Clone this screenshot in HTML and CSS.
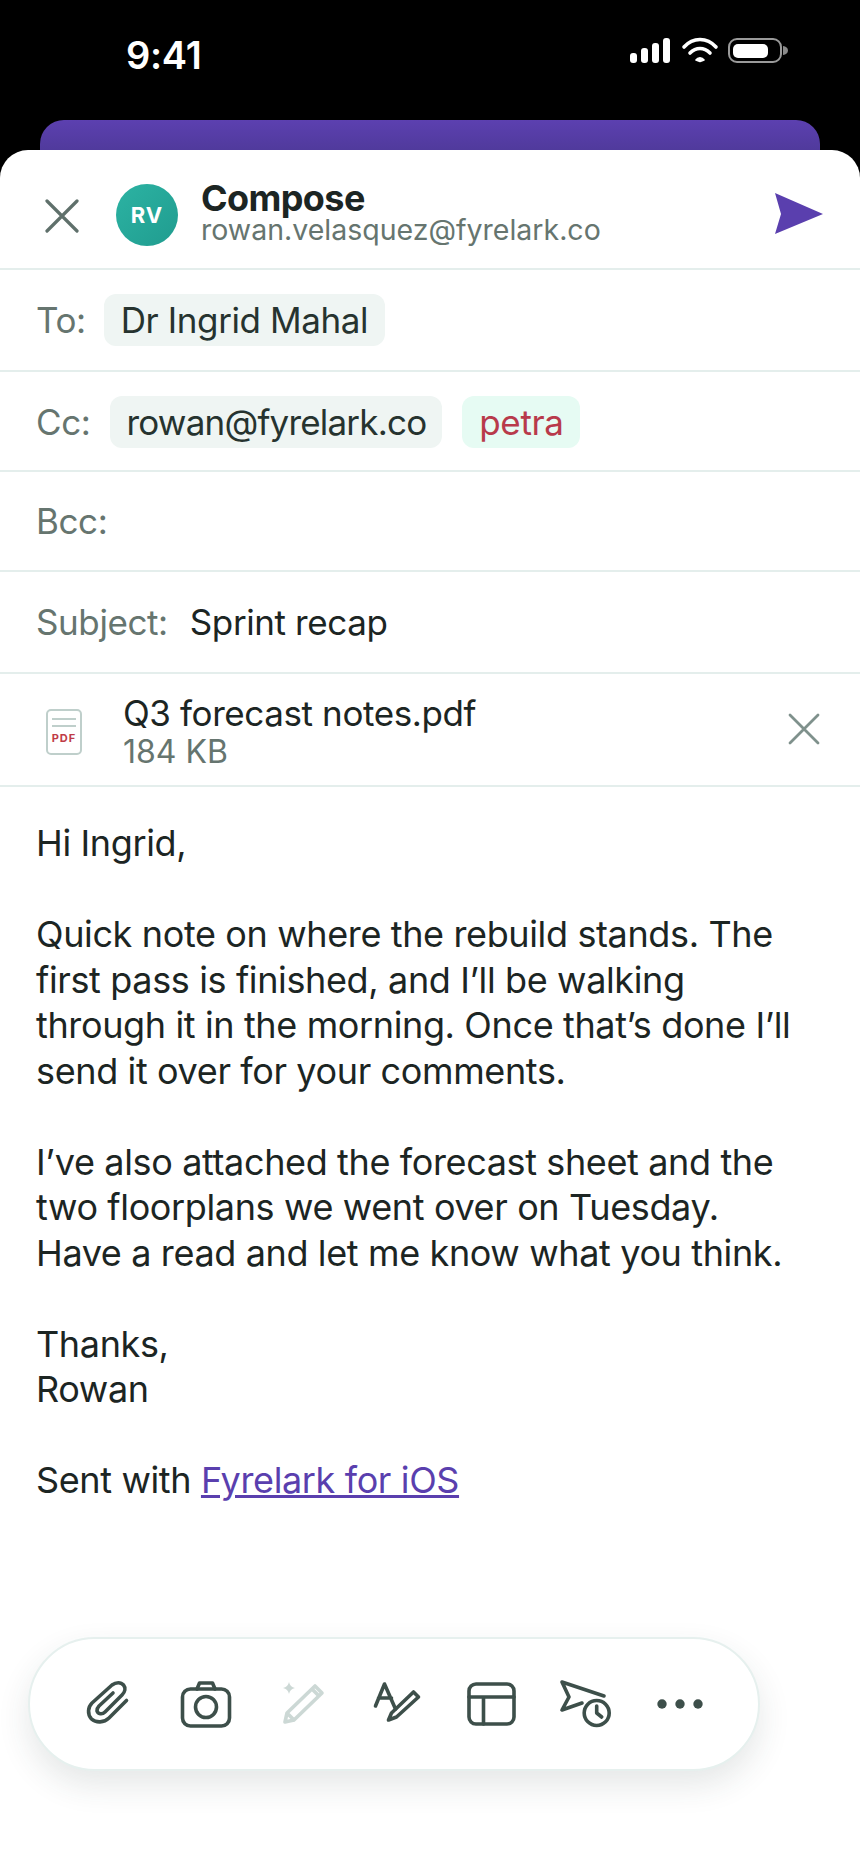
FILE: index.html
```html
<!DOCTYPE html>
<html lang="en">
<head>
    <meta charset="UTF-8">
    <meta name="viewport" content="width=device-width, initial-scale=1.0">
    <title>Compose</title>
    <link rel="stylesheet" href="styles.css">
</head>
<body>
    <div class="status-bar">
        <span class="time">9:41</span>
        <svg class="status-icons" width="160" height="30" viewBox="0 0 160 30">
            <rect x="0" y="17" width="7" height="10" rx="3" fill="#fff"/>
            <rect x="11" y="12" width="7" height="15" rx="3" fill="#fff"/>
            <rect x="22" y="7" width="7" height="20" rx="3" fill="#fff"/>
            <rect x="33" y="2" width="7" height="25" rx="3" fill="#fff"/>
            <path d="M54 11 C63 1 77 1 86 11" fill="none" stroke="#fff" stroke-width="3.6" stroke-linecap="round"/>
            <path d="M60 17 C66 11 74 11 80 17" fill="none" stroke="#fff" stroke-width="3.6" stroke-linecap="round"/>
            <path d="M66 24 C68 21 72 21 74 24 L70 25.5 Z" fill="#fff" stroke="#fff" stroke-width="1.6" stroke-linejoin="round"/>
            <rect x="99" y="3" width="52" height="23" rx="8" fill="none" stroke="#9a9a9a" stroke-width="2"/>
            <rect x="103" y="8" width="35" height="14" rx="5" fill="#fff"/>
            <path d="M153 10 c3 0.5 5 2 5 4.500 s-2 4 -5 4.500 Z" fill="#8a8a8a"/>
        </svg>
    </div>
    <div class="card-behind"></div>

    <div class="sheet">
        <header class="compose-head">
            <svg class="close-icon" width="34" height="34" viewBox="0 0 34 34">
                <path d="M2 2 L32 32 M32 2 L2 32" fill="none" stroke="#5f706b" stroke-width="3.200" stroke-linecap="round"/>
            </svg>
            <div class="avatar">RV</div>
            <div class="head-text">
                <div class="head-title">Compose</div>
                <div class="head-email">rowan.velasquez@fyrelark.co</div>
            </div>
            <svg class="send-icon" width="48" height="42" viewBox="0 0 48 42">
                <path d="M0 0 L48 21 L0 41 L6 21 Z" fill="#5a3fae"/>
            </svg>
        </header>

        <div class="row row-to">
            <span class="label">To:</span>
            <span class="chip">Dr Ingrid Mahal</span>
        </div>
        <div class="row row-cc">
            <span class="label">Cc:</span>
            <span class="chip chip-addr">rowan@fyrelark.co</span>
            <span class="chip chip-bad">petra</span>
        </div>
        <div class="row row-bcc">
            <span class="label">Bcc:</span>
        </div>
        <div class="row row-subject">
            <span class="label">Subject:</span>
            <span class="subject">Sprint recap</span>
        </div>
        <div class="attachment">
            <div class="pdf-icon">
                <span class="pdf-lines"></span>
                <span class="pdf-tag">PDF</span>
            </div>
            <div class="file-info">
                <div class="file-name">Q3 forecast notes.pdf</div>
                <div class="file-size">184 KB</div>
            </div>
            <svg class="remove-icon" width="32" height="32" viewBox="0 0 32 32">
                <path d="M2 2 L30 30 M30 2 L2 30" fill="none" stroke="#7f918c" stroke-width="2.800" stroke-linecap="round"/>
            </svg>
        </div>

        <div class="message">
            <p>Hi Ingrid,</p>
            <p>Quick note on where the rebuild stands. The<br>first pass is finished, and I’ll be walking<br>through it in the morning. Once that’s done I’ll<br>send it over for your comments.</p>
            <p>I’ve also attached the forecast sheet and the<br>two floorplans we went over on Tuesday.<br>Have a read and let me know what you think.</p>
            <p>Thanks,<br>Rowan</p>
            <p>Sent with <a href="#">Fyrelark for iOS</a></p>
        </div>

        <div class="toolbar">
            <svg class="tool" viewBox="0 0 56 56"><g transform="translate(-4 0)"><path d="M47.500 24.500 L30 42 C25 47 17 47 12.500 43 C8 38 9 31 13 27 L33 9 C37 6 42 6 44.500 9 C47 12 46 16 43 19 L26 36 C23 39 19 38 18 35 C18 33 19 31 20 30 L34 17"/></g></svg>
            <svg class="tool" viewBox="0 0 56 56"><rect x="4.500" y="13" width="47" height="37" rx="8"/><path d="M19 13 L21.500 7 H34.500 L37 13"/><circle cx="28" cy="31" r="10.500"/></svg>
            <svg class="tool tool-off" viewBox="0 0 56 56"><g transform="translate(2 0)"><path d="M10 46 L12 37 L40 10 L47 17 L19 44 Z M12 37 L19 44 M37 13 L44 20"/><path class="sparkle" d="M14 6 Q15 11 20 12 Q15 13 14 18 Q13 13 8 12 Q13 11 14 6 Z"/></g></svg>
            <svg class="tool" viewBox="0 0 56 56"><g transform="translate(1.500 0)"><path d="M7 30 L16 8 L27 33 M10 22 H23"/><path d="M20 44 L23 37 L45 16 L50 21 L28 41 Z"/></g></svg>
            <svg class="tool" viewBox="0 0 56 56"><g transform="translate(1.500 0)"><rect x="5.500" y="8" width="45" height="40" rx="7"/><path d="M5.500 21 H50.500 M20 21 V48"/></g></svg>
            <svg class="tool" viewBox="0 0 56 56"><g transform="translate(1 0)"><path d="M46 20 L4 6 L11 21 L4 34 L24 27"/><circle cx="38.700" cy="37" r="12.500"/><path d="M38.700 30 V37 L43.700 41"/></g></svg>
            <svg class="tool" viewBox="0 0 56 56"><circle class="dot" cx="10" cy="28" r="4.700"/><circle class="dot" cx="28" cy="28" r="4.700"/><circle class="dot" cx="46" cy="28" r="4.700"/></svg>
        </div>
    </div>
</body>
</html>
```

FILE: styles.css
```css
* {
    box-sizing: border-box;
}

body {
    margin: 0;
    background: #000;
    font-family: Inter, "Noto Sans", sans-serif;
    color: #1c2523;
}

.status-bar {
    height: 120px;
    display: flex;
    justify-content: space-between;
    align-items: flex-start;
    padding: 34px 70px 0 126px;
}

.time {
    color: #fff;
    font-size: 38px;
    font-weight: 600;
    line-height: 42px;
    letter-spacing: -0.3px;
}

.status-icons {
    margin-top: 2px;
}

.card-behind {
    height: 30px;
    margin: 0 40px;
    border-radius: 24px 24px 0 0;
    background: linear-gradient(#5c40b0, #503a9c);
}

.sheet {
    position: relative;
    height: 1714px;
    background: #fff;
    border-radius: 28px 28px 0 0;
}

.compose-head {
    height: 120px;
    display: flex;
    align-items: center;
    padding: 7px 37px 0 45px;
    border-bottom: 2px solid #e4eeec;
}

.close-icon {
    margin-top: 7px;
}

.avatar {
    width: 62px;
    height: 62px;
    margin-left: 37px;
    margin-top: 5px;
    border-radius: 50%;
    background: linear-gradient(135deg, #2cb3a3, #209c8f);
    color: #fff;
    font-size: 22px;
    font-weight: 700;
    letter-spacing: 1px;
    display: flex;
    align-items: center;
    justify-content: center;
}

.head-text {
    flex: 1;
    margin-left: 23px;
}

.head-title {
    font-size: 36px;
    font-weight: 700;
    line-height: 34px;
    letter-spacing: -0.6px;
}

.head-email {
    font-size: 28.500px;
    line-height: 30px;
    color: #66756f;
}

.send-icon {
    margin-top: 2px;
}

.row {
    display: flex;
    align-items: center;
    padding: 0 36px;
    border-bottom: 2px solid #e4eeec;
    font-size: 35px;
    letter-spacing: -0.4px;
}

.row-to {
    height: 102px;
    gap: 18px;
}

.row-cc {
    height: 100px;
    padding-top: 2px;
    gap: 20px;
}

.row-bcc {
    height: 100px;
}

.row-subject {
    height: 102px;
    gap: 22px;
}

.label {
    color: #66756f;
}

.chip {
    height: 52px;
    line-height: 52px;
    padding: 0 17px;
    border-radius: 12px;
    background: #eff5f3;
    color: #26332f;
}

.chip-addr {
    padding: 0 16px;
    letter-spacing: -0.8px;
}

.chip-bad {
    background: #e6fbf3;
    color: #b83a4b;
}

.attachment {
    height: 113px;
    display: flex;
    align-items: center;
    padding: 4px 40px 0 46px;
    border-bottom: 2px solid #e4eeec;
}

.pdf-icon {
    width: 36px;
    height: 46px;
    border: 2px solid #bfcfcb;
    border-radius: 5px;
    display: flex;
    flex-direction: column;
    align-items: center;
    padding-top: 7px;
}

.pdf-lines {
    width: 24px;
    height: 9px;
    border-top: 2px solid #bfcfcb;
    border-bottom: 2px solid #bfcfcb;
}

.pdf-tag {
    margin-top: 5px;
    font-size: 11px;
    font-weight: 700;
    line-height: 13px;
    letter-spacing: 1px;
    color: #bf3b47;
}

.file-info {
    flex: 1;
    margin-left: 41px;
}

.file-name {
    font-size: 35px;
    line-height: 40px;
    letter-spacing: -0.4px;
}

.file-size {
    font-size: 32px;
    line-height: 38px;
    color: #66756f;
}

.remove-icon {
    margin-bottom: 5px;
}

.message {
    padding: 34px 36px 0;
    font-size: 36px;
    line-height: 45.500px;
    letter-spacing: -0.37px;
}

.message p {
    margin: 0 0 45.500px;
}

.message a {
    color: #5a3fae;
}

.toolbar {
    position: absolute;
    left: 28px;
    top: 1487px;
    width: 732px;
    height: 134px;
    padding: 0 50px 0 53px;
    display: flex;
    align-items: center;
    justify-content: space-between;
    background: #fff;
    border: 2px solid #e6f0ee;
    border-radius: 67px;
    box-shadow: 0 14px 32px rgba(40, 60, 55, 0.12);
}

.tool {
    width: 56px;
    height: 56px;
    fill: none;
    stroke: #3d4f4a;
    stroke-width: 3.600;
    stroke-linecap: round;
    stroke-linejoin: round;
    overflow: visible;
}

.tool-off {
    stroke: #ccd8d5;
}

.sparkle {
    fill: #ccd8d5;
    stroke: none;
}

.dot {
    fill: #3d4f4a;
    stroke: none;
}
```
